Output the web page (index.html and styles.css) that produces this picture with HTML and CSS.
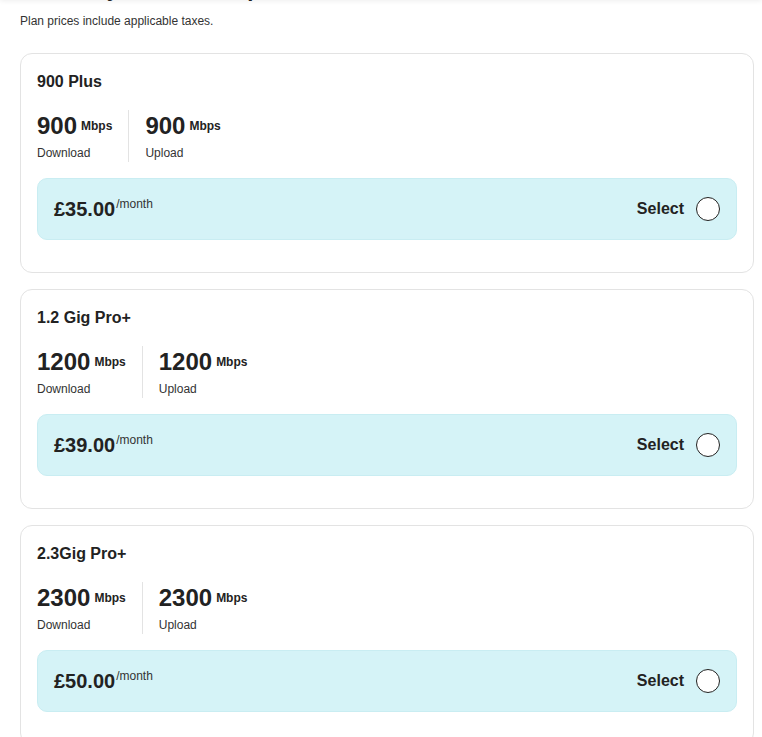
FILE: index.html
```html
<!DOCTYPE html>
<html lang="en">
<head>
<meta charset="utf-8">
<title>Plans</title>
<link rel="stylesheet" href="styles.css">
</head>
<body>
<div class="topbar"></div>
<main class="page">
  <h1 class="heading">Choose your internet plan</h1>
  <p class="note">Plan prices include applicable taxes.</p>

  <div class="plans">
    <section class="card">
      <h2 class="title">900 Plus</h2>
      <div class="speeds">
        <div class="speed">
          <div class="value"><span class="num">900</span><span class="unit">Mbps</span></div>
          <div class="label">Download</div>
        </div>
        <div class="speed">
          <div class="value"><span class="num">900</span><span class="unit">Mbps</span></div>
          <div class="label">Upload</div>
        </div>
      </div>
      <div class="pricebox">
        <div class="price"><span class="amount">£35.00</span><span class="per">/month</span></div>
        <label class="select">Select <span class="radio"></span></label>
      </div>
    </section>

    <section class="card">
      <h2 class="title">1.2 Gig Pro+</h2>
      <div class="speeds">
        <div class="speed">
          <div class="value"><span class="num">1200</span><span class="unit">Mbps</span></div>
          <div class="label">Download</div>
        </div>
        <div class="speed">
          <div class="value"><span class="num">1200</span><span class="unit">Mbps</span></div>
          <div class="label">Upload</div>
        </div>
      </div>
      <div class="pricebox">
        <div class="price"><span class="amount">£39.00</span><span class="per">/month</span></div>
        <label class="select">Select <span class="radio"></span></label>
      </div>
    </section>

    <section class="card">
      <h2 class="title">2.3Gig Pro+</h2>
      <div class="speeds">
        <div class="speed">
          <div class="value"><span class="num">2300</span><span class="unit">Mbps</span></div>
          <div class="label">Download</div>
        </div>
        <div class="speed">
          <div class="value"><span class="num">2300</span><span class="unit">Mbps</span></div>
          <div class="label">Upload</div>
        </div>
      </div>
      <div class="pricebox">
        <div class="price"><span class="amount">£50.00</span><span class="per">/month</span></div>
        <label class="select">Select <span class="radio"></span></label>
      </div>
    </section>
  </div>
</main>
</body>
</html>
```
FILE: styles.css
```css
* { box-sizing: border-box; }
html, body { margin: 0; padding: 0; background: #fff; }
body {
  font-family: "Liberation Sans", Arial, sans-serif;
  color: #222;
  overflow: hidden;
}
.topbar {
  position: fixed;
  top: -60px;
  left: 0;
  right: 0;
  height: 60px;
  background: #fff;
  box-shadow: 0 1px 5px rgba(0,0,0,0.07);
  z-index: 5;
}
.page {
  padding: 0 8px 0 20px;
  margin-top: -27px;
}
.heading {
  margin: 0;
  font-size: 22px;
  line-height: 32px;
  font-weight: 700;
  color: #222;
}
.note {
  margin: 7px 0 0;
  font-size: 12px;
  line-height: 18px;
  color: #333;
}
.plans {
  margin-top: 23px;
  display: flex;
  flex-direction: column;
  gap: 16px;
}
.card {
  border: 1px solid #e3e3e3;
  border-radius: 12px;
  padding: 17px 16px 32px;
  background: #fff;
}
.title {
  margin: 0;
  font-size: 16px;
  line-height: 22px;
  font-weight: 700;
  color: #222;
}
.speeds {
  display: flex;
  margin-top: 17px;
}
.speed {
  padding-right: 16px;
}
.speed + .speed {
  border-left: 1px solid #e3e3e3;
  padding-left: 16px;
}
.value {
  font-size: 24px;
  line-height: 32px;
  height: 31px;
  white-space: nowrap;
}
.num {
  font-size: 24px;
  font-weight: 700;
  color: #222;
}
.unit {
  font-size: 12px;
  font-weight: 700;
  margin-left: 4px;
  vertical-align: 4px;
  line-height: 1;
}
.label {
  margin-top: 3px;
  font-size: 12px;
  line-height: 18px;
  color: #333;
}
.pricebox {
  margin-top: 16px;
  height: 62px;
  background: #d5f3f7;
  border: 1px solid #c9edf2;
  border-radius: 10px;
  padding: 0 16px;
  display: flex;
  align-items: center;
  justify-content: space-between;
}
.price {
  line-height: 24px;
  white-space: nowrap;
  padding-top: 2px;
}
.amount {
  font-size: 20px;
  font-weight: 700;
  color: #222;
}
.per {
  font-size: 12px;
  line-height: 1;
  vertical-align: 8px;
  color: #333;
  margin-left: 1px;
}
.select {
  display: flex;
  align-items: center;
  gap: 12px;
  font-size: 16px;
  font-weight: 700;
  color: #222;
}
.radio {
  width: 24px;
  height: 24px;
  border-radius: 50%;
  border: 1px solid #222;
  background: #fff;
  display: block;
}
```
